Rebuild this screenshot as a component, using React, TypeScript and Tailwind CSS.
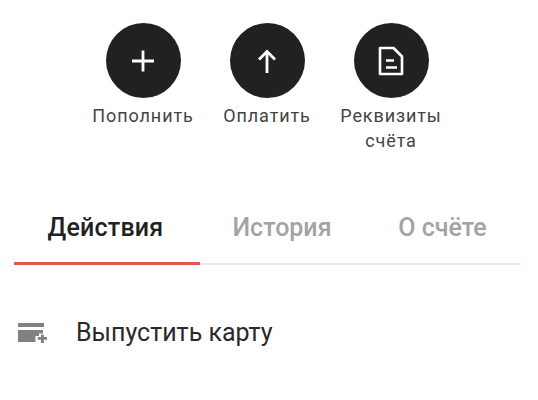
import React from 'react';

const actions = [
  { label: ['Пополнить'], icon: 'plus' },
  { label: ['Оплатить'], icon: 'up' },
  { label: ['Реквизиты', 'счёта'], icon: 'doc' },
];

const ActionIcon = ({ name }: { name: string }) => {
  if (name === 'plus') {
    return (
      <svg width="24" height="24" viewBox="0 0 24 24" fill="none" stroke="#fff" strokeWidth="2.8">
        <path d="M12 1.500v21M1 12h22" />
      </svg>
    );
  }
  if (name === 'up') {
    return (
      <svg width="20" height="24" viewBox="0 0 20 24" fill="none" stroke="#fff" strokeWidth="2.8">
        <path d="M10 24V3M2 10.500 10 2.500l8 8" />
      </svg>
    );
  }
  return (
    <svg width="26" height="30" viewBox="0 0 26 30" fill="none" stroke="#fff" strokeWidth="2.6">
      <path d="M2 2h13.500L24 10.500V28H2z" strokeLinejoin="round" />
      <path d="M8 14.500h8M8 21.500h11" strokeWidth="2.4" />
    </svg>
  );
};

export default function App() {
  return (
    <div className="w-[538px] h-[400px] bg-white overflow-hidden font-['Roboto',sans-serif] text-[#212121]">
      <div className="flex pt-[23px] pl-[81px]">
        {actions.map((a) => (
          <div key={a.icon} className="w-[124px] flex flex-col items-center">
            <div className="w-[75px] h-[75px] rounded-full bg-[#212123] flex items-center justify-center">
              <ActionIcon name={a.icon} />
            </div>
            <div className="mt-[5px] text-[18px] leading-[25px] tracking-[0.9px] text-center text-[#444444]">
              {a.label.map((l) => (
                <div key={l}>{l}</div>
              ))}
            </div>
          </div>
        ))}
      </div>
      <div className="mt-[46px] ml-[14px] mr-[17px] flex border-b-2 border-[#ececec] h-[66px] text-[25px] font-medium">
        <div className="w-[186px] h-[66px] border-b-[3px] border-[#e5584f] text-center pt-[10px] pr-[3px] tracking-[0.2px] text-[#212121]">Действия</div>
        <div className="w-[164px] text-center pt-[10px] text-[#a3a3a3]">История</div>
        <div className="flex-1 text-center pt-[10px] text-[#a3a3a3]">О счёте</div>
      </div>
      <div className="mt-[53px] pl-[17px] flex items-center gap-[29px]">
        <svg width="30" height="20" viewBox="0 0 30 20" fill="#808285">
          <path d="M1 0h26v4H1z" />
          <path d="M1 7h25v3.500h-4V13h-3.500v6H1z" />
          <path d="M24 11.500h2.800V14H30v2.800h-3.200V20H24v-3.200h-3.200V14H24z" />
        </svg>
        <span className="text-[25px] leading-[30px] text-[#2a2a2a]">Выпустить карту</span>
      </div>
    </div>
  );
}
